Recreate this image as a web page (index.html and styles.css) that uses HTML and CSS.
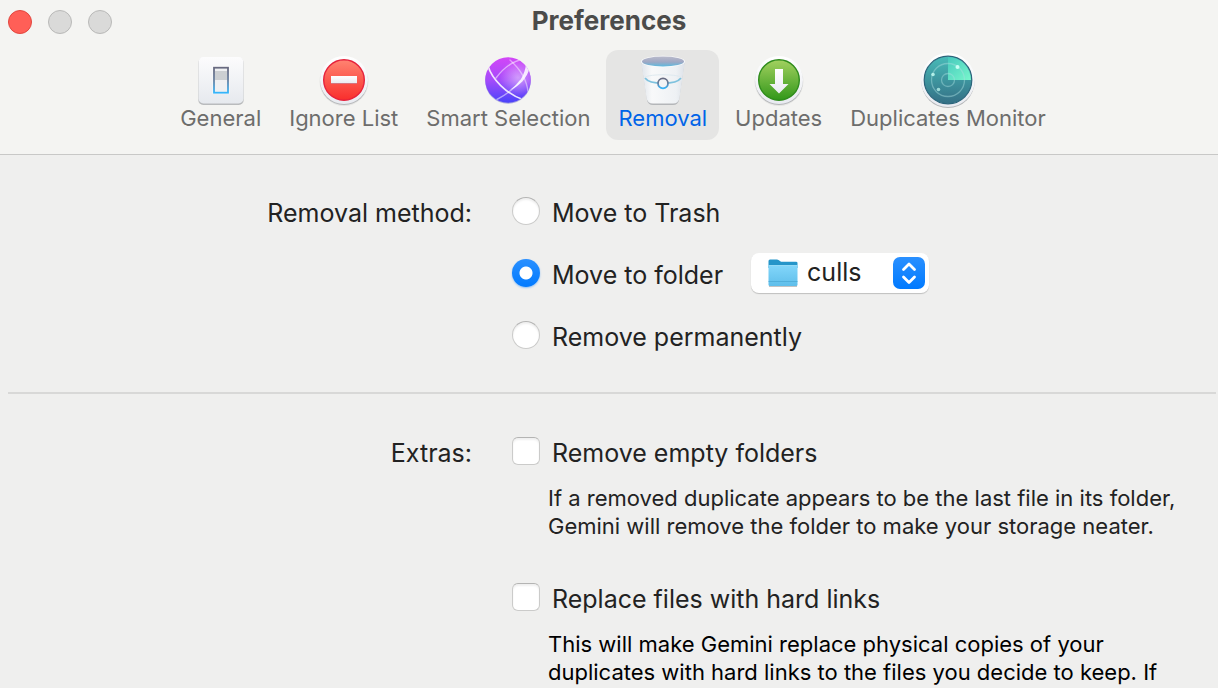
FILE: index.html
```html
<!DOCTYPE html>
<html lang="en">
<head>
  <meta charset="UTF-8">
  <title>Preferences</title>
  <meta name="viewport" content="width=device-width, initial-scale=1.0">
  <link rel="stylesheet" href="styles.css">
</head>
<body>
  <header class="titlebar">
    <div class="title-row">
      <div class="window-buttons">
        <button class="dot close" aria-label="Close"></button>
        <button class="dot" aria-label="Minimize"></button>
        <button class="dot" aria-label="Zoom"></button>
      </div>
      <h1>Preferences</h1>
    </div>

    <nav class="tabs">
      <button class="tab">
        <svg viewBox="0 0 60 56" aria-hidden="true">
          <defs>
            <linearGradient id="plate" x1="0" y1="0" x2="0" y2="1"><stop offset="0" stop-color="#fcfcfd"/><stop offset="1" stop-color="#e6e9ee"/></linearGradient>
            <linearGradient id="switch" x1="0" y1="0" x2="0" y2="1"><stop offset="0" stop-color="#686a80"/><stop offset=".5" stop-color="#6880a0"/><stop offset="1" stop-color="#35b5fb"/></linearGradient>
          </defs>
          <rect x="7" y="6" width="46" height="47" rx="5" fill="#000" opacity=".08"/>
          <rect x="7.500" y="6" width="45" height="47" rx="5" fill="#b9bbbd"/>
          <rect x="7.500" y="5" width="45" height="46.500" rx="5" fill="url(#plate)"/>
          <rect x="21.500" y="14" width="17" height="28" fill="#fff" opacity=".7"/>
          <rect x="23" y="15.700" width="14" height="25" fill="#eff0f2" stroke="url(#switch)" stroke-width="1.800"/>
          <path d="M24 19h12v9H24z" fill="#cccfd2"/>
        </svg>
        <span>General</span>
      </button>
      <button class="tab">
        <svg viewBox="0 0 60 56" aria-hidden="true">
          <defs>
            <linearGradient id="ring" x1="0" y1="0" x2="0" y2="1"><stop offset="0" stop-color="#fff"/><stop offset="1" stop-color="#e9ebf1"/></linearGradient>
            <linearGradient id="red" x1="0" y1="0" x2="0" y2="1"><stop offset="0" stop-color="#ff8471"/><stop offset="1" stop-color="#f92e2c"/></linearGradient>
          </defs>
          <circle cx="30" cy="29.500" r="24.500" fill="#000" opacity=".06"/>
          <circle cx="30" cy="29.300" r="23.800" fill="#b5b7b9"/>
          <circle cx="30" cy="28" r="24" fill="url(#ring)"/>
          <circle cx="30" cy="28" r="20.300" fill="url(#red)" stroke="#e6223c" stroke-width="1.400"/>
          <path d="M17 25h26v7H17z" fill="#c82633"/>
          <path d="M17 24h26v7.400H17z" fill="url(#ring)"/>
        </svg>
        <span>Ignore List</span>
      </button>
      <button class="tab">
        <svg viewBox="0 0 60 56" aria-hidden="true">
          <defs>
            <linearGradient id="violet" x1="0" y1="0" x2="0" y2="1"><stop offset="0" stop-color="#d346f7"/><stop offset=".5" stop-color="#a54bfa"/><stop offset="1" stop-color="#4a43fa"/></linearGradient>
            <radialGradient id="glow" cx=".72" cy=".45" r=".4"><stop offset="0" stop-color="#fff" stop-opacity=".45"/><stop offset="1" stop-color="#fff" stop-opacity="0"/></radialGradient>
            <clipPath id="ball"><circle cx="30" cy="28" r="22.800"/></clipPath>
          </defs>
          <circle cx="30" cy="29" r="22.800" fill="#aaa6e0"/>
          <circle cx="30" cy="28" r="22.800" fill="url(#violet)"/>
          <g clip-path="url(#ball)" fill="none" stroke="#fff" stroke-linecap="round">
            <circle cx="30" cy="28" r="22.800" fill="url(#glow)" stroke="none"/>
            <path d="M10 14C14 27 28 42 46 48" stroke-width="1.700" opacity=".85"/>
            <path d="M18 26C26 15 35 9 46 7" stroke-width="1.400" opacity=".5"/>
            <path d="M32 8C42 17 49 29 50 40" stroke-width="1.400" opacity=".45"/>
            <path d="M18 48C28 43 36 37 42 29" stroke-width="1.400" opacity=".5"/>
            <path d="M32 38C41 32 47 23 48 12L52 15C49 26 42 34 32 38z" fill="#fff" stroke="none" opacity=".85"/>
          </g>
        </svg>
        <span>Smart Selection</span>
      </button>
      <button class="tab active" aria-current="page">
        <svg viewBox="0 0 60 56" aria-hidden="true">
          <defs>
            <linearGradient id="bin" x1="0" y1="0" x2="1" y2="0"><stop offset="0" stop-color="#dfe4ea"/><stop offset=".25" stop-color="#f8f9fa"/><stop offset=".8" stop-color="#eef1f4"/><stop offset="1" stop-color="#dce1e8"/></linearGradient>
            <linearGradient id="mouth" x1="0" y1="0" x2="0" y2="1"><stop offset="0" stop-color="#b9bacb"/><stop offset=".55" stop-color="#9fa8c4"/><stop offset="1" stop-color="#5db9de"/></linearGradient>
          </defs>
          <path d="M8.500 10L14 48Q15 53 20 53H40Q45 53 46 48L51.500 10z" fill="#b4b6b9"/>
          <path d="M8 9L13.500 46Q14.500 51.500 20 51.500H40Q45.500 51.500 46.500 46L52 9z" fill="url(#bin)"/>
          <ellipse cx="30" cy="9.500" rx="22" ry="5.700" fill="#fafbfc"/>
          <ellipse cx="30" cy="9.500" rx="21" ry="5" fill="url(#mouth)"/>
          <path d="M12 26C17 33 43 33 48 26" fill="none" stroke="#7ec2de" stroke-width="1.700"/>
          <path d="M12 25C18 22 42 22 48 25" fill="none" stroke="#dfeaf0" stroke-width="1"/>
          <circle cx="30" cy="31.300" r="5" fill="#f3f4f6" stroke="url(#switch)" stroke-width="1.800"/>
        </svg>
        <span>Removal</span>
      </button>
      <button class="tab">
        <svg viewBox="0 0 60 56" aria-hidden="true">
          <defs>
            <linearGradient id="green" x1="0" y1="0" x2="0" y2="1"><stop offset="0" stop-color="#a3d160"/><stop offset="1" stop-color="#319719"/></linearGradient>
          </defs>
          <circle cx="30" cy="29.500" r="24.500" fill="#000" opacity=".06"/>
          <circle cx="30" cy="29.300" r="23.800" fill="#b5b7b9"/>
          <circle cx="30" cy="28" r="24" fill="url(#ring)"/>
          <circle cx="30" cy="28" r="20.300" fill="url(#green)" stroke="#2f8c1c" stroke-width="1.400"/>
          <path d="M26 17h8v15h5.500L30 41.500 20.500 32H26z" fill="url(#ring)"/>
        </svg>
        <span>Updates</span>
      </button>
      <button class="tab">
        <svg viewBox="0 0 60 56" aria-hidden="true">
          <defs>
            <linearGradient id="teal" x1="0" y1="0" x2="0" y2="1"><stop offset="0" stop-color="#48bbb8"/><stop offset="1" stop-color="#346f85"/></linearGradient>
            <linearGradient id="sweep" x1="0" y1="0" x2="1" y2="1"><stop offset="0" stop-color="#47c9bd"/><stop offset="1" stop-color="#78f7cc"/></linearGradient>
          </defs>
          <circle cx="30" cy="29.300" r="26.700" fill="#b5b7b9"/>
          <circle cx="30" cy="28" r="27" fill="url(#ring)"/>
          <circle cx="30" cy="28" r="23.800" fill="url(#teal)" stroke="#2b657b" stroke-width="1.200"/>
          <path d="M30 28V5A23 23 0 0 1 53 28z" fill="url(#sweep)"/>
          <g fill="none" stroke="#a9dfe0" stroke-width="1.300" opacity=".45">
            <circle cx="30" cy="28" r="16.500"/>
            <circle cx="30" cy="28" r="6.500"/>
          </g>
          <g fill="#c8fff5">
            <circle cx="39.500" cy="15" r="2"/>
            <circle cx="15" cy="22.500" r="1.800" opacity=".8"/>
            <circle cx="20.500" cy="37.500" r="1.800" opacity=".7"/>
          </g>
        </svg>
        <span>Duplicates Monitor</span>
      </button>
    </nav>
  </header>

  <main>
    <section class="group" role="radiogroup" aria-labelledby="method-label">
      <h2 id="method-label">Removal method:</h2>
      <div class="options">
        <div class="option">
          <input type="radio" name="method" id="trash">
          <label for="trash">Move to Trash</label>
        </div>
        <div class="option">
          <input type="radio" name="method" id="folder" checked>
          <label for="folder">Move to folder</label>
          <div class="folder-picker">
            <select aria-label="Folder">
              <option>culls</option>
            </select>
            <svg class="folder-icon" viewBox="0 0 32 30" aria-hidden="true">
              <defs>
                <linearGradient id="folder-front" x1="0" y1="0" x2="0" y2="1"><stop offset="0" stop-color="#82d6fa"/><stop offset="1" stop-color="#5fbeea"/></linearGradient>
              </defs>
              <path d="M2 5h28v24H2z" fill="#aaa" opacity=".7"/>
              <path d="M1.500 3Q1.500 1.500 3 1.500H10Q11.500 1.500 13 3L14 3.700H29Q30.500 3.700 30.500 5V10H1.500z" fill="#2595c9"/>
              <path d="M1.500 7.500H30.500V26.500Q30.500 28 29 28H3Q1.500 28 1.500 26.500z" fill="url(#folder-front)"/>
              <path d="M1.500 23.500h29" stroke="#4ba9d6" stroke-width=".8"/>
              <path d="M1.500 7.500h29" stroke="#a4e3fb" stroke-width=".8"/>
            </svg>
            <svg class="stepper" viewBox="0 0 32 32" aria-hidden="true">
              <defs>
                <linearGradient id="blue" x1="0" y1="0" x2="0" y2="1"><stop offset="0" stop-color="#2a90ff"/><stop offset="1" stop-color="#007aff"/></linearGradient>
              </defs>
              <rect width="32" height="32" rx="7" fill="url(#blue)"/>
              <path d="M10.500 12.500L16 7l5.500 5.500M10.500 20l5.500 5.500 5.500-5.500" fill="none" stroke="#fff" stroke-width="2.800" stroke-linecap="round" stroke-linejoin="round"/>
            </svg>
          </div>
        </div>
        <div class="option">
          <input type="radio" name="method" id="permanent">
          <label for="permanent">Remove permanently</label>
        </div>
      </div>
    </section>

    <hr>

    <section class="group">
      <h2>Extras:</h2>
      <div class="extras">
        <div class="extra">
          <div class="option">
            <input type="checkbox" id="empty" aria-describedby="empty-note">
            <label for="empty">Remove empty folders</label>
          </div>
          <p id="empty-note">If a removed duplicate appears to be the last file in its folder, Gemini will remove the folder to make your storage neater.</p>
        </div>
        <div class="extra">
          <div class="option">
            <input type="checkbox" id="links" aria-describedby="links-note">
            <label for="links">Replace files with hard links</label>
          </div>
          <p id="links-note" class="dark">This will make Gemini replace physical copies of your duplicates with hard links to the files you decide to keep. If</p>
        </div>
      </div>
    </section>
  </main>
</body>
</html>
```
FILE: styles.css
```css
* {
  box-sizing: border-box;
}

body {
  margin: 0;
  background: #efefee;
  color: #222;
  font-family: Inter, "Liberation Sans", sans-serif;
  font-size: 25px;
}

button, select {
  font-family: inherit;
  border: none;
}

.titlebar {
  background: #f4f4f2;
  border-bottom: 1px solid #c8c8c7;
}

.title-row {
  display: grid;
  grid-template-columns: 1fr auto 1fr;
  align-items: center;
  height: 44px;
  padding: 0 8px;
}

.title-row h1 {
  margin: 0 0 2px;
  color: #4b4b4a;
  font-size: 26px;
  font-weight: 700;
  line-height: 40px;
}

.window-buttons {
  display: flex;
  gap: 16px;
}

.dot {
  width: 24px;
  height: 24px;
  padding: 0;
  border: 1px solid #b9b9b8;
  border-radius: 50%;
  background: #dadad9;
}

.dot.close {
  border-color: #e2463f;
  background: #ff5f57;
}

.tabs {
  display: flex;
  justify-content: center;
  gap: 4px;
  padding: 6px 0 14px 8px;
}

.tab {
  display: flex;
  flex-direction: column;
  align-items: center;
  height: 90px;
  padding: 2px 12px 0;
  border-radius: 12px;
  background: none;
  color: #6d6d6c;
  font-size: 22px;
  line-height: 20px;
  white-space: nowrap;
}

.tab svg {
  display: block;
  width: 60px;
  height: 56px;
}

.tab.active {
  background: #e5e5e4;
  color: #0064e8;
}

.group {
  display: grid;
  grid-template-columns: 472px 1fr;
  column-gap: 40px;
}

.group h2 {
  margin: 0;
  font-size: inherit;
  font-weight: 400;
  line-height: 40px;
  text-align: right;
}

main {
  padding-top: 38px;
}

hr {
  height: 2px;
  margin: 35px 2px 39px 8px;
  border: none;
  background: #d8d8d7;
}

.options {
  display: flex;
  flex-direction: column;
  gap: 22px;
}

.option {
  display: flex;
  align-items: center;
  height: 40px;
}

.option input {
  appearance: none;
  flex: none;
  width: 28px;
  height: 28px;
  margin: 0 12px 4px 0;
  border: 1px solid #cbcbca;
  border-top-color: #b4b4b3;
  background: #fff;
  box-shadow: inset 0 2px 2px #f0f0f0;
}

.option input[type="radio"] {
  border-radius: 50%;
}

.option input[type="checkbox"] {
  border-radius: 6px;
}

.option input[type="radio"]:checked {
  border: none;
  background: radial-gradient(circle, #fff 6px, transparent 7px), linear-gradient(#2a90ff, #007aff);
  box-shadow: 0 1px 2px rgba(0, 122, 255, 0.4);
}

.folder-picker {
  position: relative;
  margin: 0 0 4px 28px;
}

.folder-picker select {
  appearance: none;
  display: block;
  width: 178px;
  height: 40px;
  padding: 0 48px 2px 56px;
  border-radius: 8px;
  background: #fff;
  box-shadow: 0 1px 1px rgba(0, 0, 0, 0.2);
  color: #222;
  font-size: 25px;
}

.folder-icon, .stepper {
  position: absolute;
  top: 4px;
  width: 32px;
  height: 32px;
  pointer-events: none;
}

.folder-icon {
  left: 16px;
}

.stepper {
  right: 4px;
}

.extras {
  display: flex;
  flex-direction: column;
  gap: 39px;
}

.extra p {
  max-width: 660px;
  margin: 11px 0 0 36px;
  font-size: 22px;
  line-height: 28px;
}

.extra p.dark {
  color: #000;
}
```
